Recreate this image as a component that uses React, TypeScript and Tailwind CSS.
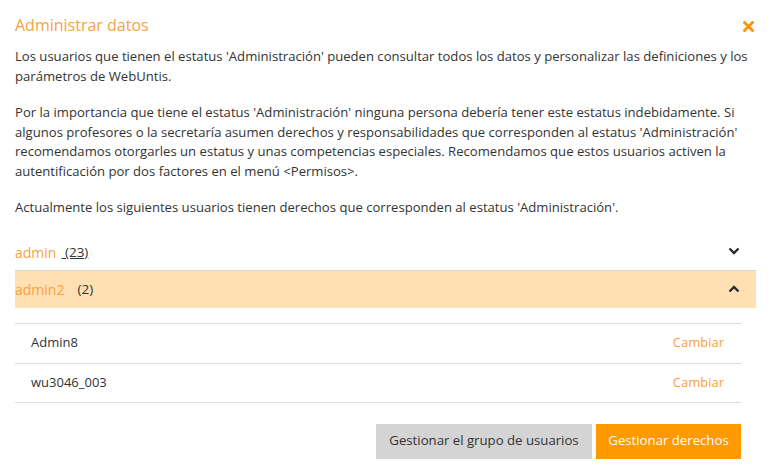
import React from "react";

const Chevron = ({ up }: { up?: boolean }) => (
  <svg width="12" height="8" viewBox="0 0 12 8" className="block">
    <path
      d={up ? "M1.5 6.5 L6 2 L10.5 6.5" : "M1.5 1.5 L6 6 L10.5 1.5"}
      fill="none"
      stroke="#2b2b2b"
      strokeWidth="2.4"
    />
  </svg>
);

export default function App() {
  const font = { fontFamily: "'Open Sans', 'Noto Sans', sans-serif" };
  return (
    <div className="w-[770px] h-[475px] bg-white text-[#333333] overflow-hidden" style={font}>
      <div className="flex items-center justify-between pl-[15px] pr-[16px] pt-[12px] h-[38px]">
        <h1 className="text-[16px] text-[#f9a23c] leading-[24px]">Administrar datos</h1>
        <svg width="11" height="11" viewBox="0 0 11 11" className="mt-[2px]">
          <path d="M1.5 1.5 L9.5 9.5 M9.5 1.5 L1.5 9.5" stroke="#ff9409" strokeWidth="3" strokeLinecap="round" />
        </svg>
      </div>
      <div className="pl-[15px] pr-[14px] pt-[9px] text-[13.1px] leading-[19.5px]">
        <p className="mb-[17px]">
          Los usuarios que tienen el estatus 'Administración' pueden consultar todos los datos y personalizar las definiciones y los parámetros de WebUntis.
        </p>
        <p className="mb-[17px]">
          Por la importancia que tiene el estatus 'Administración' ninguna persona debería tener este estatus indebidamente. Si algunos profesores o la secretaría asumen derechos y responsabilidades que corresponden al estatus 'Administración' recomendamos otorgarles un estatus y unas competencias especiales. Recomendamos que estos usuarios activen la autentificación por dos factores en el menú &lt;Permisos&gt;.
        </p>
        <p>Actualmente los siguientes usuarios tienen derechos que corresponden al estatus 'Administración'.</p>
      </div>
      <div className="ml-[15px] w-[741px] mt-[15px]">
        <div className="flex items-center justify-between h-[38px] border-b border-[#d6d6d6] pr-[16px]">
          <div className="flex items-center text-[14px] pt-[2px]">
            <span className="text-[#f9a23c]">admin</span>
            <span className="underline ml-[5px] text-[13.5px]">&nbsp;(23)</span>
          </div>
          <Chevron />
        </div>
        <div className="flex items-center justify-between h-[37px] bg-[#ffe0b2] pr-[16px]">
          <div className="flex items-center text-[14px]">
            <span className="text-[#f9a23c]">admin2</span>
            <span className="ml-[13px] text-[13.5px]">(2)</span>
          </div>
          <Chevron up />
        </div>
        <div className="w-[726px] pt-[15px]">
          {["Admin8", "wu3046_003"].map((n) => (
            <div key={n} className="flex items-center justify-between h-[40px] border-t border-[#dddddd] last:border-b pl-[16px] pr-[17px] text-[13px]">
              <span>{n}</span>
              <span className="text-[#f9a23c]">Cambiar</span>
            </div>
          ))}
        </div>
        <div className="flex justify-end gap-[4px] w-[726px] mt-[21px]">
          <button className="h-[35px] px-[10px] bg-[#d4d4d4] text-[13.2px] text-[#333333] w-[216px]">Gestionar el grupo de usuarios</button>
          <button className="h-[35px] px-[10px] bg-[#ff9900] text-[13.2px] text-white w-[145px]">Gestionar derechos</button>
        </div>
      </div>
    </div>
  );
}
